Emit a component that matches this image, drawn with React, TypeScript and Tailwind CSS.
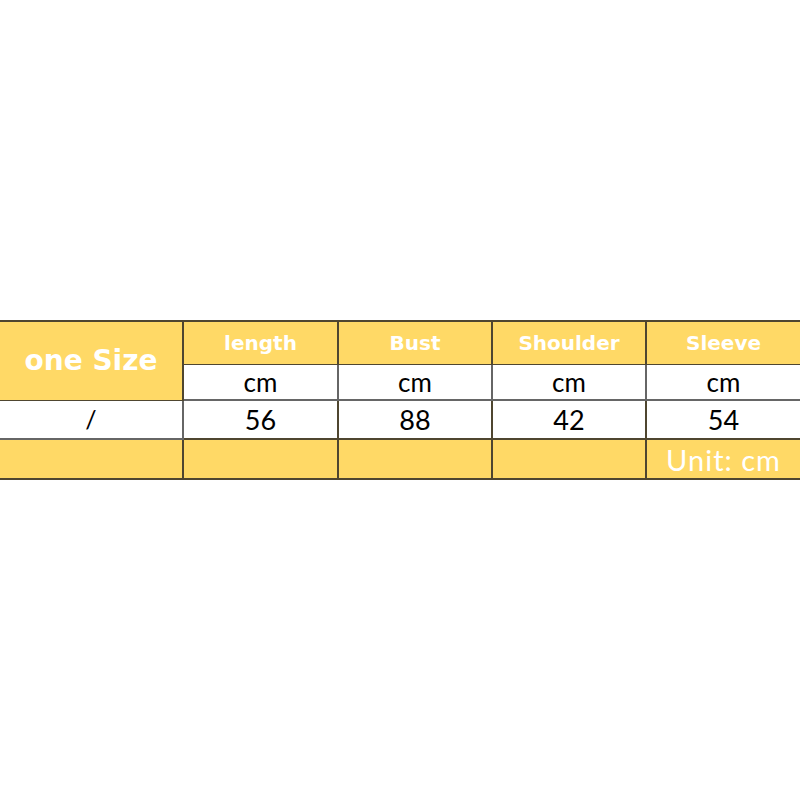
import React from 'react';

const heads = ['length', 'Bust', 'Shoulder', 'Sleeve'];
const values = ['56', '88', '42', '54'];

const App: React.FC = () => {
  return (
    <div className="h-[800px] w-[800px] bg-white flex items-center" style={{ fontFamily: 'Lato, "Open Sans", sans-serif' }}>
      <table className="w-[800px] border-collapse table-fixed border-t-2 border-b-2 border-[#4f4630]">
        <colgroup>
          <col className="w-[183px]" />
          <col className="w-[155px]" />
          <col className="w-[154px]" />
          <col className="w-[154px]" />
          <col className="w-[154px]" />
        </colgroup>
        <tbody>
          {/* header */}
          <tr className="h-[43px] bg-[#ffd966] font-['DejaVu_Sans',sans-serif]">
            <td
              rowSpan={2}
              className="bg-[#ffd966] text-center text-white font-bold text-[28px] border-r-2 border-b border-[#4f4630]"
            >
              one Size
            </td>
            {heads.map((h, i) => (
              <td
                key={h}
                className={`text-center text-white font-bold text-[20px] border-b border-[#4f4630] ${i < 3 ? 'border-r-2' : ''}`}
              >
                {h}
              </td>
            ))}
          </tr>
          {/* units */}
          <tr className="h-[36px] bg-white">
            {heads.map((h, i) => (
              <td
                key={h}
                className={`text-center text-black text-[26px] leading-none border-b-2 border-[#666] ${i < 3 ? 'border-r-2' : ''}`}
              >
                cm
              </td>
            ))}
          </tr>
          {/* values */}
          <tr className="h-[39px] bg-white">
            <td className="text-center text-black text-[25px] leading-none border-r-2 border-b-2 border-[#666]">/</td>
            {values.map((v, i) => (
              <td
                key={i}
                className={`text-center text-black text-[27px] leading-none border-b-2 border-[#4f4630] ${i < 3 ? 'border-r-2' : ''}`}
              >
                {v}
              </td>
            ))}
          </tr>
          {/* footer */}
          <tr className="h-[40px] bg-[#ffd966]">
            <td className="border-r-2 border-[#4f4630]" />
            <td className="border-r-2 border-[#4f4630]" />
            <td className="border-r-2 border-[#4f4630]" />
            <td className="border-r-2 border-[#4f4630]" />
            <td className="text-center text-white text-[29px] tracking-[1px] leading-none">Unit: cm</td>
          </tr>
        </tbody>
      </table>
    </div>
  );
};

export default App;
